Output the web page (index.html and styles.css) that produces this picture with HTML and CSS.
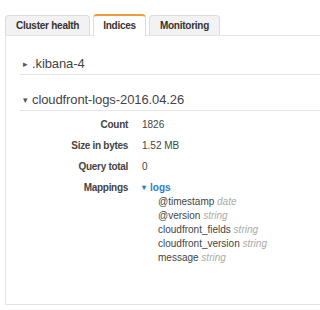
FILE: index.html
```html
<!DOCTYPE html>
<html lang="en">
<head>
    <meta charset="UTF-8">
    <title>Indices</title>
    <link rel="stylesheet" href="styles.css">
</head>
<body>
    <div class="tabs">
        <div class="tab">Cluster health</div>
        <div class="tab active">Indices</div>
        <div class="tab">Monitoring</div>
    </div>
    <div class="panel">
        <div class="index">
            <div class="index-name"><span class="caret">&#9656;</span>.kibana-4</div>
        </div>
        <div class="index open">
            <div class="index-name"><span class="caret">&#9662;</span>cloudfront-logs-2016.04.26</div>
            <div class="details">
                <div class="label">Count</div>
                <div class="value">1826</div>
                <div class="label">Size in bytes</div>
                <div class="value">1.52 MB</div>
                <div class="label">Query total</div>
                <div class="value">0</div>
                <div class="label">Mappings</div>
                <div class="value">
                    <div class="mapping"><span class="caret-sm">&#9662;</span>logs</div>
                    <ul class="fields">
                        <li>@timestamp <em>date</em></li>
                        <li>@version <em>string</em></li>
                        <li>cloudfront_fields <em>string</em></li>
                        <li>cloudfront_version <em>string</em></li>
                        <li>message <em>string</em></li>
                    </ul>
                </div>
            </div>
        </div>
    </div>
</body>
</html>
```

FILE: styles.css
```css
body { margin: 0; padding: 15px 0 0 5px; font-family: "Liberation Sans", Arial, sans-serif; color: #333; background: #fff; overflow: hidden; }
.tabs { display: flex; gap: 3px; height: 20px; }
.tab { box-sizing: border-box; height: 20px; padding: 0 10px; border: 1px solid #dcdcdc; border-bottom: none; border-radius: 4px 4px 0 0; background: #f2f2f2; font-size: 10px; font-weight: bold; letter-spacing: -0.25px; line-height: 19px; color: #333; }
.tab.active { position: relative; z-index: 1; height: 22px; margin-top: -1px; background: #fff; border-top: 2px solid #ec9c3a; line-height: 20px; padding: 0 9px; }
.panel { box-sizing: border-box; width: 315px; height: 270px; border: 1px solid #e4e4e4; border-right: none; padding: 20px 0 0 14px; }
.index-name { font-size: 13px; letter-spacing: -0.1px; line-height: 16px; height: 16px; padding-bottom: 2px; border-bottom: 1px solid #e4e4e4; color: #444; }
.index + .index { margin-top: 17px; }
.caret { display: inline-block; width: 9px; margin-left: 3px; font-size: 9px; line-height: 16px; vertical-align: top; color: #555; }
.details { display: grid; grid-template-columns: 108px auto; column-gap: 14px; row-gap: 7px; margin-top: 7px; font-size: 10px; line-height: 14px; }
.label { text-align: right; font-weight: bold; letter-spacing: -0.3px; color: #444; }
.value { color: #444; }
.mapping { color: #2a7bcf; font-weight: bold; }
.caret-sm { display: inline-block; width: 8px; font-size: 8px; vertical-align: top; }
.fields { list-style: none; margin: 0; padding: 0 0 0 16px; }
.fields em { color: #aaa; }
```
